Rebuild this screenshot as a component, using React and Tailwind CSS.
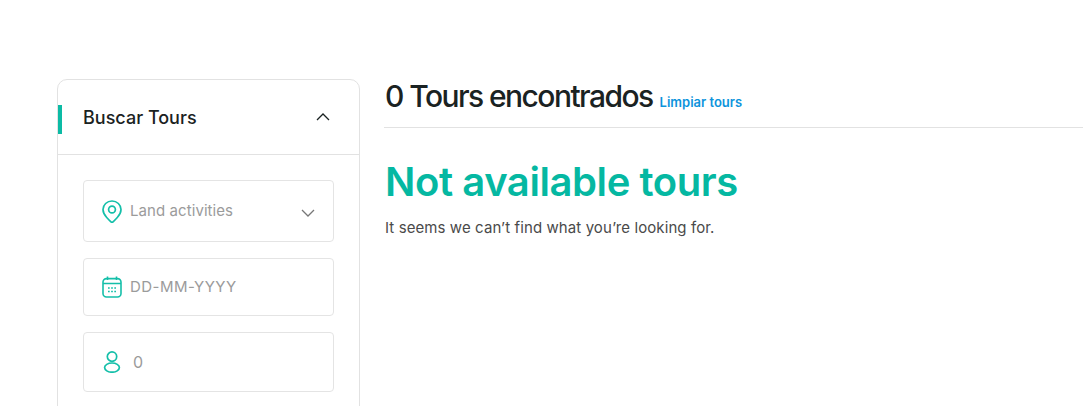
import React from "react";

const PinIcon = () => (
  <svg width="20" height="23" viewBox="0 0 20 23" fill="none" stroke="#14bfa9" strokeWidth="1.7">
    <path d="M10 1C5 1 1 4.8 1 9.6c0 3.2 1.6 5.6 3.7 7.9 1.5 1.6 3 3.2 4 4.2.7.6 1.9.6 2.6 0 1-1 2.5-2.6 4-4.2 2.1-2.3 3.7-4.7 3.7-7.9C19 4.8 15 1 10 1z" />
    <circle cx="10" cy="9.5" r="3.4" />
  </svg>
);

const CalendarIcon = () => (
  <svg width="20" height="22" viewBox="0 0 20 22" fill="none" stroke="#14bfa9" strokeWidth="1.6">
    <rect x="1" y="2.6" width="18" height="18.4" rx="3.5" />
    <path d="M1 7.5h18M5.5 .5v3.5M14.5 .5v3.5" />
    <path d="M6 12h1.7M9.15 12h1.7M12.3 12h1.7M6 15.5h1.7M9.15 15.5h1.7M12.3 15.5h1.7" strokeWidth="1.7" />
  </svg>
);

const UserIcon = () => (
  <svg width="18" height="22" viewBox="0 0 18 22" fill="none" stroke="#14bfa9" strokeWidth="1.7">
    <circle cx="9" cy="5.6" r="4.7" />
    <ellipse cx="9" cy="16.6" rx="7.4" ry="4.6" />
  </svg>
);

const Chevron = ({ up, color }) => (
  <svg width="14" height="8" viewBox="0 0 14 8" fill="none" stroke={color} strokeWidth="1.3">
    <path d={up ? "M1 7l6-6 6 6" : "M1 1l6 6 6-6"} />
  </svg>
);

const App = () => {
  return (
    <div className="h-[406px] overflow-hidden bg-white font-['Inter',sans-serif] flex items-start pl-[57px] pt-[79px]">
      {/* Search panel */}
      <aside className="w-[303px] h-[400px] shrink-0 border border-[#e2e2e2] rounded-[10px]">
        <div className="relative h-[75px] border-b border-[#e2e2e2] flex items-center justify-between pl-[25px] pr-[29px]">
          <span className="absolute left-0 top-[25px] w-1 h-[29px] bg-[#0cbba5]" />
          <h3 className="text-[18px] font-medium text-[#1a2222]">Buscar Tours</h3>
          <Chevron up color="#1a2222" />
        </div>

        <div className="pt-[25px] px-[25px] flex flex-col gap-4">
          <div className="h-[62px] border border-[#e4e4e4] rounded flex items-center px-[18px]">
            <PinIcon />
            <span className="ml-2 text-[15px] tracking-[0.005em] text-[#9b9b9b]">Land activities</span>
            <span className="ml-auto mt-1"><Chevron color="#777777" /></span>
          </div>
          <div className="h-[58px] border border-[#e4e4e4] rounded flex items-center pl-[18px]">
            <CalendarIcon />
            <span className="ml-2 text-[15px] text-[#9b9b9b] tracking-[0.03em]">DD-MM-YYYY</span>
          </div>
          <div className="h-[60px] border border-[#e4e4e4] rounded flex items-center pl-[19px]">
            <UserIcon />
            <span className="ml-3 text-[16px] text-[#9b9b9b]">0</span>
          </div>
        </div>
      </aside>

      {/* Results */}
      <main className="ml-6 flex-1 min-w-0">
        <div className="h-[49px] border-b border-[#e2e2e2] pl-px flex items-baseline">
          <h2 className="text-[30px] leading-[34px] font-medium tracking-[-0.052em] text-[#1a2222]">0 Tours encontrados</h2>
          <a className="ml-[7px] text-[13px] font-semibold text-[#0d94dc]">Limpiar tours</a>
        </div>
        <h1 className="mt-[26px] pl-px text-[40px] leading-[56px] font-semibold tracking-[-0.0105em] text-[#05b8a2]">Not available tours</h1>
        <p className="mt-[6px] pl-px text-[15px] leading-6 tracking-[0.006em] text-[#4a4a4a]">It seems we can’t find what you’re looking for.</p>
      </main>
    </div>
  );
};

export default App;
